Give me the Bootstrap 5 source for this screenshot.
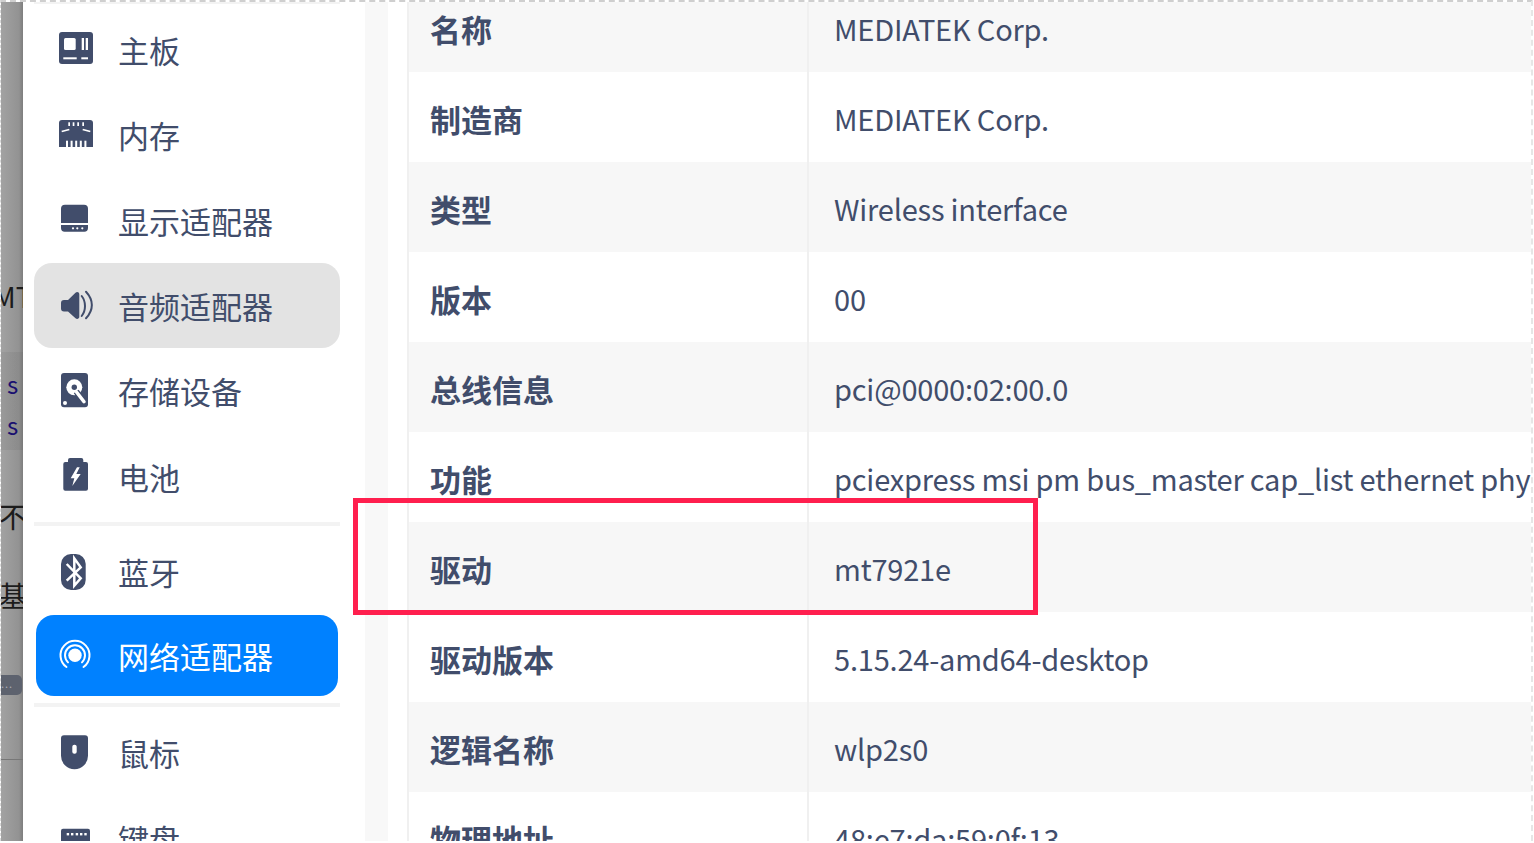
<!DOCTYPE html>
<html lang="zh-CN">
<head>
    <meta charset="UTF-8">
    <meta name="viewport" content="width=device-width, initial-scale=1.0">
    <title>设备管理器</title>
    <link href="https://cdn.jsdelivr.net/npm/bootstrap@5.3.0/dist/css/bootstrap.min.css" rel="stylesheet">
    <style>
        html, body { height: 843px; overflow: hidden; background: #fff; }
        body { font-family: "Noto Sans CJK SC", "Noto Sans", sans-serif; color: #414d6b; }
        .shot-frame { position: relative; height: 841px; overflow: hidden; border-top: 2px dashed #cfcfcf; border-left: 1px dashed #d8d8d8; border-right: 2px dashed #e6e6e6; margin-right: 1px; }

        /* окно позади */
        .peek-strip { width: 22px; flex: none; overflow: hidden; color: #1c1c1c; font-size: 28px; line-height: 40px; white-space: nowrap;
            background: linear-gradient(90deg, rgba(0,0,0,0) 0, rgba(0,0,0,0) 18px, rgba(0,0,0,.12) 22px),
                        linear-gradient(180deg, rgba(0,0,0,0) 350px, rgba(0,0,0,.05) 350px, rgba(0,0,0,.05) 448px, rgba(0,0,0,0) 448px),
                        linear-gradient(90deg, #a2a2a2, #8f8f8f); }
        .peek-text { height: 40px; margin-left: -2px; }
        .peek-mt { margin-top: 274px; margin-left: -8px; }
        .peek-s { margin-left: 6px; color: #1a1070; font-size: 24px; }
        .peek-s1 { margin-top: 48px; }
        .peek-s2 { margin-top: 1px; }
        .peek-bu { margin-top: 51px; }
        .peek-qi { margin-top: 39px; }
        .peek-bubble { margin-top: 60px; width: 21px; height: 20px; border-radius: 0 5px 5px 0; background: #5d626e; color: #a9acb3; font-size: 11px; line-height: 16px; letter-spacing: 1px; }
        .peek-line { margin-top: 64px; height: 1px; background: #777; }

        /* боковое меню */
        .side-panel { width: 342px; flex: none; padding: 0 25px 0 11px; background: #fff; }
        .side-top { height: 2px; background: #f3f3f3; margin-bottom: 3px; }
        .side-link { display: flex; align-items: center; gap: 24px; height: 85.33px; padding: 0 0 0 24px; color: #414d6b; font-size: 31px; line-height: 1; border-radius: 18px; }
        .side-link:hover, .side-link:focus { color: #414d6b; }
        .side-link svg { flex: none; overflow: visible; }
        .side-link.is-current { background: #e3e3e3; }
        .side-link.is-selected { height: 81px; margin: 1px 2px 7px; padding-left: 22px; background: #0081ff; color: #fff; }
        .side-rule { height: 4px; background: #f3f3f3; margin: 3px 0; }
        .side-rule.after-sel { margin-top: 0; }
        .ico-fill { fill: #414d6b; }

        .gutter-grey { width: 23px; flex: none; background: #f8f8f8; }
        .gutter-white { width: 19px; flex: none; background: #fff; }

        /* таблица свойств */
        .props-wrap { flex: 1 1 0; min-width: 0; overflow: hidden; }
        .props-table { --bs-table-striped-bg: #f7f7f7; --bs-table-striped-color: #414d6b; --bs-table-color: #414d6b; margin: -20px 0 0; table-layout: fixed; width: 100%; border-left: 2px solid #f0f0f0; }
        .props-table th, .props-table td { height: 90px; padding: 3px 0 0 21px; vertical-align: middle; border-bottom: 0; font-size: 29px; line-height: 1.2; white-space: nowrap; overflow: hidden; letter-spacing: -0.2px; }
        .props-table th { width: 400px; font-size: 31px; font-weight: 700; letter-spacing: 0; border-right: 2px solid #f0f0f0; }
        .props-table td { padding-left: 25px; }

        .mark-box { position: absolute; left: 352px; top: 496px; width: 685px; height: 117px; border: 5px solid #ff1f4e; pointer-events: none; }
    </style>
</head>
<body>
    <div class="shot-frame d-flex">
        <div class="peek-strip">
            <div class="peek-text peek-mt">MT</div>
            <div class="peek-text peek-s peek-s1">s</div>
            <div class="peek-text peek-s peek-s2">s</div>
            <div class="peek-text peek-bu">不</div>
            <div class="peek-text peek-qi">基</div>
            <div class="peek-bubble">...</div>
            <div class="peek-line"></div>
        </div>

        <div class="side-panel">
            <div class="side-top"></div>
            <nav class="nav flex-column flex-nowrap">
                <a class="nav-link side-link" href="#">
                    <svg width="36" height="36" viewBox="0 0 36 36"><rect class="ico-fill" x="1" y="0" width="34" height="32" rx="3"/><g fill="#fff"><rect x="6" y="6" width="11.7" height="12" rx="1.5"/><rect x="23.7" y="6" width="2.3" height="12"/><rect x="27.7" y="6" width="2.3" height="12"/><rect x="5.3" y="25.3" width="13.4" height="2"/><rect x="23.3" y="25.3" width="6.7" height="2"/></g></svg>
                    主板
                </a>
                <a class="nav-link side-link" href="#">
                    <svg width="36" height="36" viewBox="0 0 36 36"><path class="ico-fill" d="M4 3h28a3 3 0 0 1 3 3v24H1V6a3 3 0 0 1 3-3z"/><g fill="#fff"><rect x="10.3" y="5.3" width="1.7" height="3.7"/><rect x="14.7" y="5.3" width="1.7" height="3.7"/><rect x="19.3" y="5.3" width="1.7" height="3.7"/><rect x="24.3" y="5.3" width="1.7" height="3.7"/><rect x="8" y="23.7" width="2" height="6.3"/><rect x="12.6" y="23.7" width="2" height="6.3"/><rect x="17.2" y="23.7" width="2" height="6.3"/><rect x="21.8" y="23.7" width="2" height="6.3"/><rect x="26.4" y="23.7" width="2" height="6.3"/></g><path d="M3.7 14.5l7.6-2M24.7 12.5l7.6 2" stroke="#fff" stroke-width="1.8" fill="none"/></svg>
                    内存
                </a>
                <a class="nav-link side-link" href="#">
                    <svg width="36" height="36" viewBox="0 0 36 36"><path class="ico-fill" d="M7 2.7h19a4 4 0 0 1 4 4V21H3V6.7a4 4 0 0 1 4-4zM3 23h27v3a3.700 3.700 0 0 1-3.700 3.700H6.700A3.700 3.700 0 0 1 3 26z"/><g fill="#fff"><circle cx="15" cy="26.300" r="1.100"/><circle cx="19.300" cy="26.300" r="1.100"/><circle cx="24.300" cy="26.300" r="1.100"/></g></svg>
                    显示适配器
                </a>
                <a class="nav-link side-link is-current" href="#">
                    <svg width="36" height="36" viewBox="0 0 36 36"><path class="ico-fill" d="M3 15c0-2 1-3 3-3h4l7.500-7.300c1.500-1.400 3.800-.6 3.800 1.500v22.600c0 2.100-2.300 2.900-3.800 1.500L10 23.500H6c-2 0-3-1-3-3z"/><path d="M23.700 8c4.400 5.700 4.400 14.300 0 20M28 3.700c7.800 8.400 7.800 18.200 0 26.600" fill="none" stroke="#414d6b" stroke-width="2" stroke-linecap="round"/></svg>
                    音频适配器
                </a>
                <a class="nav-link side-link" href="#">
                    <svg width="36" height="36" viewBox="0 0 36 36"><rect class="ico-fill" x="3" y="0" width="27" height="34.300" rx="3"/><circle cx="16.300" cy="14.300" r="8" fill="#fff"/><path d="M18.200 18.500l8 10.500" stroke="#414d6b" stroke-width="6" fill="none"/><path d="M18.700 19.300l7.300 9.400" stroke="#fff" stroke-width="3.500" stroke-linecap="round" fill="none"/><circle class="ico-fill" cx="16.300" cy="14.300" r="2.700"/><circle cx="7" cy="30" r="2" fill="#fff"/></svg>
                    存储设备
                </a>
                <a class="nav-link side-link" href="#">
                    <svg width="36" height="36" viewBox="0 0 36 36"><path class="ico-fill" d="M12 0h11.300a2 2 0 0 1 2 2v2H28a2 2 0 0 1 2 2v24.700a2 2 0 0 1-2 2H7.300a2 2 0 0 1-2-2V6a2 2 0 0 1 2-2H10V2a2 2 0 0 1 2-2z"/><path d="M19 9.300L12.700 20.300h3.600L14.300 28l8.400-12h-4.400l3.400-6.700z" fill="#fff"/></svg>
                    电池
                </a>
                <div class="side-rule"></div>
                <a class="nav-link side-link" href="#">
                    <svg width="36" height="36" viewBox="0 0 36 36"><rect class="ico-fill" x="3" y="0" width="24.700" height="36" rx="10"/><path d="M8.700 10L22.700 24.300 16.300 31.700V4.300L22.700 13.300 8.700 26.700" fill="none" stroke="#fff" stroke-width="2.500"/></svg>
                    蓝牙
                </a>
                <a class="nav-link side-link is-selected" href="#">
                    <svg width="36" height="36" viewBox="0 0 36 36" fill="none" stroke="#fff" stroke-width="2" stroke-linecap="round"><circle cx="17" cy="17.300" r="6.700" fill="#fff" stroke="none"/><path d="M10 24.400a10 10 0 1 1 14 0"/><path d="M8.500 29a14.500 14.500 0 1 1 17 0"/></svg>
                    网络适配器
                </a>
                <div class="side-rule after-sel"></div>
                <a class="nav-link side-link" href="#">
                    <svg width="36" height="36" viewBox="0 0 36 36"><path class="ico-fill" d="M6 .3h21a3 3 0 0 1 3 3v17.500a13.500 13.500 0 0 1-27 0V3.300a3 3 0 0 1 3-3z"/><rect x="14.300" y="9.700" width="4.400" height="9" rx="2" fill="#fff"/></svg>
                    鼠标
                </a>
                <a class="nav-link side-link" href="#">
                    <svg width="36" height="36" viewBox="0 0 36 36"><rect class="ico-fill" x="3" y="8.700" width="29" height="28" rx="2"/><g fill="#fff"><rect x="8.700" y="13" width="2.400" height="2.400"/><rect x="13" y="13" width="2.400" height="2.400"/><rect x="17.700" y="13" width="2.400" height="2.400"/><rect x="22" y="13" width="2.400" height="2.400"/><rect x="26.300" y="13" width="2.400" height="2.400"/></g></svg>
                    键盘
                </a>
            </nav>
        </div>

        <div class="gutter-grey"></div>
        <div class="gutter-white"></div>

        <div class="props-wrap">
            <table class="table table-striped props-table">
                <tbody>
                    <tr><th scope="row">名称</th><td>MEDIATEK Corp.</td></tr>
                    <tr><th scope="row">制造商</th><td>MEDIATEK Corp.</td></tr>
                    <tr><th scope="row">类型</th><td>Wireless interface</td></tr>
                    <tr><th scope="row">版本</th><td>00</td></tr>
                    <tr><th scope="row">总线信息</th><td>pci@0000:02:00.0</td></tr>
                    <tr><th scope="row">功能</th><td>pciexpress msi pm bus_master cap_list ethernet physical wireless</td></tr>
                    <tr><th scope="row">驱动</th><td>mt7921e</td></tr>
                    <tr><th scope="row">驱动版本</th><td>5.15.24-amd64-desktop</td></tr>
                    <tr><th scope="row">逻辑名称</th><td>wlp2s0</td></tr>
                    <tr><th scope="row">物理地址</th><td>48:e7:da:59:0f:13</td></tr>
                </tbody>
            </table>
        </div>

        <div class="mark-box"></div>
    </div>

    <script src="https://cdn.jsdelivr.net/npm/bootstrap@5.3.0/dist/js/bootstrap.bundle.min.js"></script>
</body>
</html>
